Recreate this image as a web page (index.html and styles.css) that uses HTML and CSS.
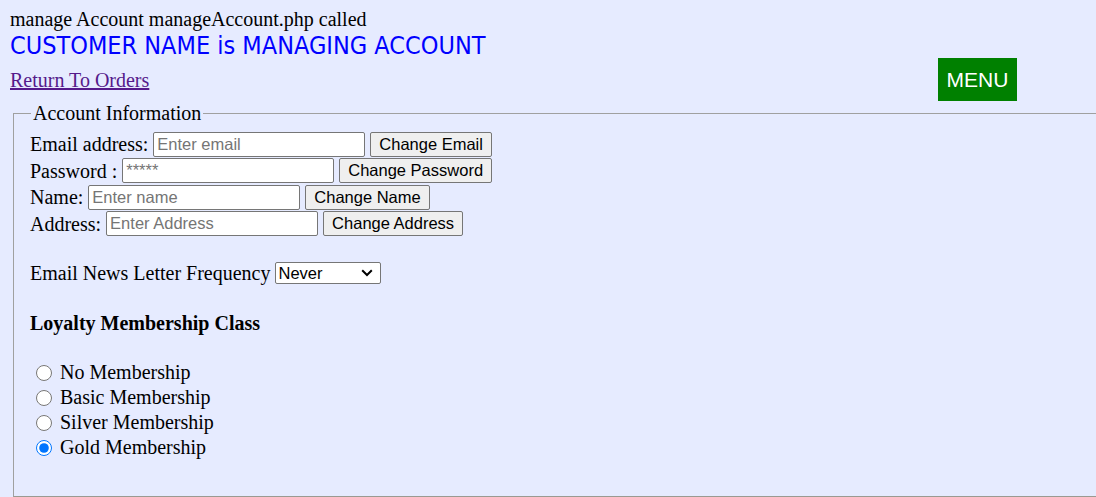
FILE: index.html
```html
<!DOCTYPE html>
<html>
<head>
<meta charset="utf-8">
<title>Manage Account</title>
<link rel="stylesheet" href="styles.css">
</head>
<body>
<div class="intro">manage Account manageAccount.php called</div>
<div class="title">CUSTOMER NAME is MANAGING ACCOUNT</div>
<a class="back" href="#">Return To Orders</a>
<button class="menu">MENU</button>
<form class="account">
  <fieldset class="box">
    <legend class="legend">Account Information</legend>
    <div class="row">Email address: <input class="field" type="text" placeholder="Enter email"> <button class="btn" type="button">Change Email</button></div>
    <div class="row">Password : <input class="field" type="password" placeholder="*****"> <button class="btn" type="button">Change Password</button></div>
    <div class="row">Name: <input class="field" type="text" placeholder="Enter name"> <button class="btn" type="button">Change Name</button></div>
    <div class="row">Address: <input class="field" type="text" placeholder="Enter Address"> <button class="btn" type="button">Change Address</button></div>
    <div class="freq">Email News Letter Frequency <select class="select"><option>Never</option><option>Weekly</option><option>Monthly</option></select></div>
    <div class="loyalty">Loyalty Membership Class</div>
    <div class="radios">
      <label class="opt"><input class="radio" type="radio" name="m"> No Membership</label>
      <label class="opt"><input class="radio" type="radio" name="m"> Basic Membership</label>
      <label class="opt"><input class="radio" type="radio" name="m"> Silver Membership</label>
      <label class="opt"><input class="radio" type="radio" name="m" checked> Gold Membership</label>
    </div>
  </fieldset>
</form>
</body>
</html>
```
FILE: styles.css
```css
html, body { height: 100%; }
body {
  margin: 0;
  padding: 8px 10px 0 10px;
  background: #e6ebff;
  font-family: "Liberation Serif", serif;
  font-size: 20px;
  color: #000;
  overflow: hidden;
  position: relative;
}
.intro { line-height: 23px; }
.title {
  font-family: "DejaVu Sans Condensed", "DejaVu Sans", sans-serif;
  font-stretch: condensed;
  font-size: 25px;
  color: #0000ff;
  line-height: 30px;
}
.back {
  display: inline-block;
  margin-top: 8px;
  line-height: 23px;
  color: #551a8b;
}
.menu {
  position: absolute;
  left: 938px;
  top: 58px;
  width: 79px;
  height: 43px;
  background: #008000;
  color: #fff;
  border: none;
  font-family: "Liberation Sans", Arial, sans-serif;
  font-size: 21px;
  padding: 0;
}
.account { margin: 0; }
.box {
  margin: 10px 0 0 3px;
  width: 1300px;
  border: 1px solid #a0a0a0;
  border-bottom: 2px solid #9a9a92;
  padding: 7px 15px 36px 16px;
}
.legend {
  padding: 0 2px;
  margin-left: 1px;
  line-height: 22px;
}
.row {
  height: 26.5px;
  line-height: 26px;
  display: flex;
  align-items: center;
  white-space: pre;
}
.field {
  box-sizing: border-box;
  width: 212px;
  height: 25px;
  margin: 0 5px 0 0;
  padding: 1px 3px;
  border: 1px solid #767676;
  border-radius: 2px;
  background: #fff;
  font-family: "Liberation Sans", Arial, sans-serif;
  font-size: 16.5px;
}
.field::placeholder { color: #757575; }
.btn {
  box-sizing: border-box;
  height: 25px;
  margin: 0;
  padding: 0 8px;
  border: 1px solid #767676;
  border-radius: 2px;
  background: #efefef;
  color: #000;
  font-family: "Liberation Sans", Arial, sans-serif;
  font-size: 16.5px;
}
.freq {
  margin-top: 23px;
  display: flex;
  align-items: center;
  white-space: pre;
  height: 26px;
}
.select {
  box-sizing: border-box;
  width: 106px;
  height: 22px;
  margin: 0;
  border: 1px solid #767676;
  border-radius: 2px;
  font-family: "Liberation Sans", Arial, sans-serif;
  font-size: 16.5px;
  color: #000;
  padding: 0 2px;
  appearance: none;
  -webkit-appearance: none;
  background: #fff url("data:image/svg+xml;utf8,<svg xmlns='http://www.w3.org/2000/svg' width='12' height='8' viewBox='0 0 12 8'><path d='M1.2 1.3 L6 6 L10.8 1.3' fill='none' stroke='black' stroke-width='2'/></svg>") no-repeat right 7px center;
}
.loyalty {
  font-weight: bold;
  margin-top: 26px;
  line-height: 23px;
}
.radios {
  margin-top: 25px;
  display: flex;
  flex-direction: column;
}
.opt {
  height: 25px;
  display: flex;
  align-items: center;
  white-space: pre;
}
.radio {
  width: 16px;
  height: 16px;
  margin: 0 3px 0 6px;
  accent-color: #0075ff;
}
```
